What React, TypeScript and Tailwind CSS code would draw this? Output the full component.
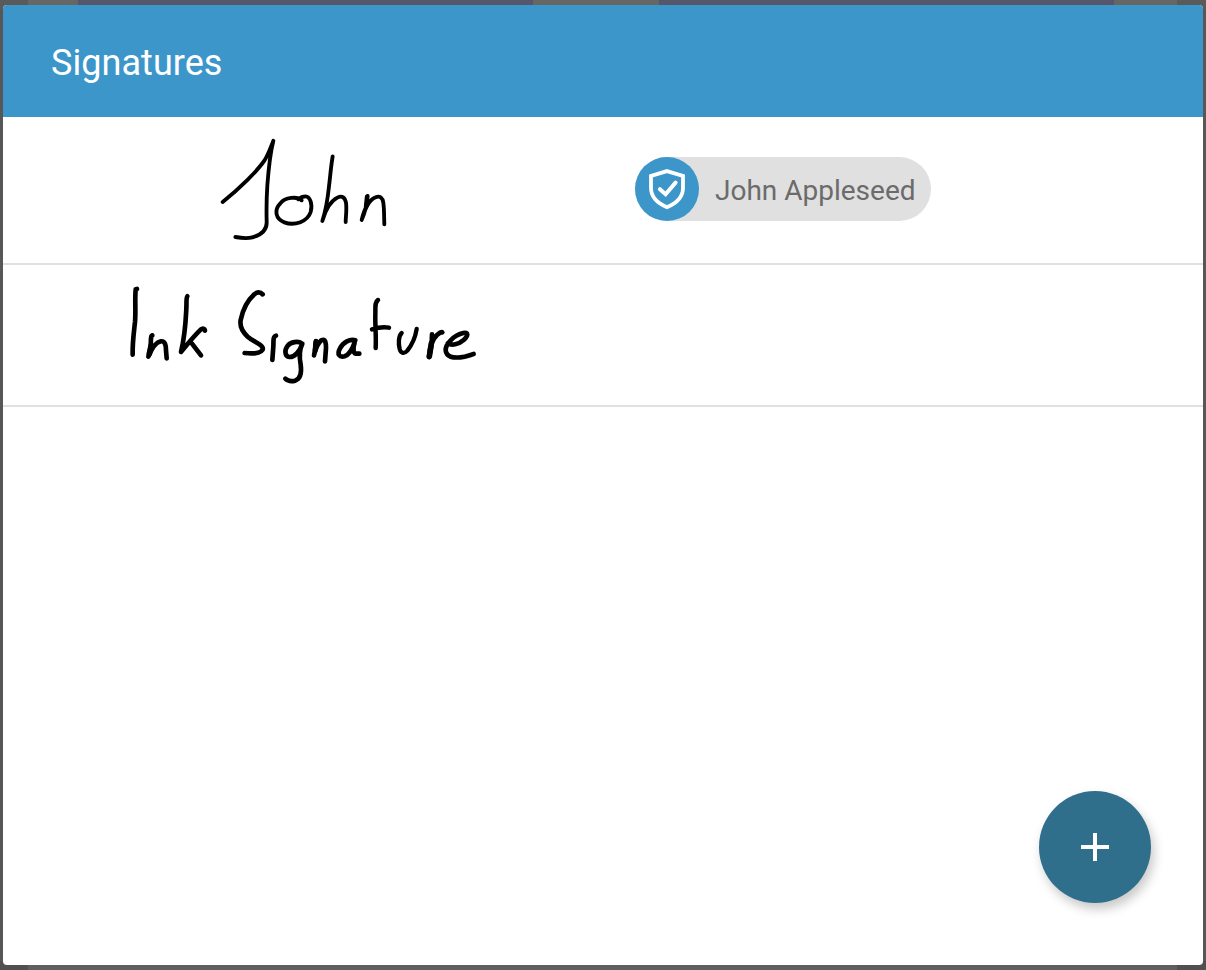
import React from "react";

function JohnInk() {
  return (
    <svg
      className="ml-[207px] h-[120px] w-[190px] shrink-0"
      viewBox="0 0 570 360"
      fill="none"
      stroke="#000"
      strokeWidth="11.5"
      strokeLinecap="round"
      strokeLinejoin="round"
      role="img"
      aria-label="John"
    >
      <path d="M38 216C88 176 143 122 163 92C175 73 182 52 190 32C180 72 176 112 172 166C169 212 169 238 170 276C171 304 148 316 127 322C108 327 92 324 76 321" />
      <path d="M275 211C262 198 225 202 211 220C191 240 197 268 223 277C255 289 293 274 302 246C309 222 299 199 287 199C279 199 270 203 264 208" />
      <path d="M368 79C362 115 361 138 357 169C353 208 347 242 337 273C345 245 359 215 382 203C397 195 405 203 408 218C411 240 407 258 407 276" />
      <path d="M473 198C471 222 465 247 455 270C462 240 477 210 497 202C510 196 518 204 520 218C523 240 522 262 523 283" />
      <path d="M471 200L468 230" strokeWidth="13" />
    </svg>
  );
}

function InkSignature() {
  return (
    <svg
      className="ml-[117px] h-[110px] w-[370px] shrink-0"
      viewBox="0 0 1110 330"
      fill="none"
      stroke="#000"
      strokeWidth="14"
      strokeLinecap="round"
      strokeLinejoin="round"
      role="img"
      aria-label="Ink Signature"
    >
      <path d="M51 27L47 28C44 65 48 91 45 126C41 163 37 190 38 224" />
      <path d="M97 166C92 167 93 180 92 196C91 210 89 221 85 230C95 206 106 186 122 184C136 182 138 198 138 211L140 235" />
      <path d="M93 198L88 221" strokeWidth="17" />
      <path d="M202 49C198 54 200 70 199 86C197 125 196 162 183 216C200 196 220 170 242 149C248 144 254 145 255 152M216 191L243 226" />
      <path d="M428 43C420 34 410 36 403 43C382 62 368 91 362 120C358 143 370 158 383 170C399 184 418 190 426 200C434 211 419 219 404 220C392 221 382 220 374 219" />
      <path d="M468 167C458 169 461 185 460 200L457 240" />
      <path d="M545 190C535 182 512 186 503 197C492 211 495 230 508 231C525 232 540 212 547 191C538 209 538 233 542 254C545 276 541 297 525 302C513 305 503 303 496 296" />
      <path d="M588 183C588 200 584 214 582 226C587 203 594 190 604 181C617 174 618 190 618 204L615 244" />
      <path d="M588 186L586 210" strokeWidth="16" />
      <path d="M706 181C690 176 670 186 660 205C650 223 658 233 674 229C690 224 698 204 704 188C699 204 699 219 707 221L718 221" />
      <path d="M774 60C763 67 767 85 766 103C765 139 769 169 767 204M756 148C775 142 792 140 807 143" strokeWidth="13.5" />
      <path d="M845 159C835 169 835 191 839 207C843 221 853 222 862 212C874 197 886 172 890 147" strokeWidth="13" />
      <path d="M936 163C936 186 934 208 927 231C929 203 937 178 951 165C959 158 965 155 967 157" />
      <path d="M934 190L928 229" strokeWidth="17" />
      <path d="M983 190C995 197 1015 194 1031 180C1046 166 1045 156 1030 159C1002 165 976 192 977 211C979 232 1001 234 1021 232C1038 231 1049 225 1061 222" />
    </svg>
  );
}

export default function App() {
  return (
    <div className="flex h-[970px] w-[1206px] flex-col overflow-hidden bg-[#575757] font-[Roboto,sans-serif]">
      <div className="flex h-[9px] shrink-0 bg-[#5a5a5a] pl-[28px]">
        <div className="w-[50px] bg-[#666665]" />
        <div className="w-[455px] bg-[#55566a]" />
        <div className="w-[126px] bg-[#666665]" />
        <div className="w-[455px] bg-[#55566a]" />
        <div className="w-[63px] bg-[#666665]" />
      </div>
      <main className="relative z-10 mx-[3px] -mt-1 flex h-[960px] shrink-0 flex-col overflow-hidden rounded bg-white">
        <header className="flex h-[112px] shrink-0 items-center bg-[#3c96ca] pl-12 pt-[4px]">
          <h1 className="text-[36px] font-normal leading-none tracking-[0.05px] text-white">Signatures</h1>
        </header>
        <div className="flex h-[148px] shrink-0 items-center border-b-2 border-[#e0e0e0]">
          <JohnInk />
          <div className="mb-[2px] ml-[235px] flex h-16 w-[296px] items-center rounded-full bg-[#e0e0e0]">
            <span className="flex size-16 shrink-0 items-center justify-center rounded-full bg-[#3c96ca]">
              <svg className="size-16" viewBox="0 0 64 64" fill="none" stroke="#fff" strokeWidth="3.8">
                <path d="M32 14.1L48 19V31C48 40 42 46 32 50.2C22 46 16 40 16 31V19Z" />
                <path d="M24.9 32.2L30.6 37.2L40.6 25.6" strokeLinecap="round" strokeWidth="4" />
              </svg>
            </span>
            <span className="ml-4 mt-[3px] whitespace-nowrap text-[28px] leading-none text-[#6b6b6b]">
              John Appleseed
            </span>
          </div>
        </div>
        <div className="flex h-[142px] shrink-0 items-center border-b-2 border-[#e0e0e0]">
          <InkSignature />
        </div>
        <div className="flex flex-1 items-end justify-end pb-[62px] pr-[52px]">
          <button
            aria-label="Add signature"
            className="flex size-28 items-center justify-center rounded-full bg-[#306f8c] shadow-[3px_6px_11px_rgba(0,0,0,0.22)]"
          >
            <svg className="size-7" viewBox="0 0 28 28" stroke="#fff" strokeWidth="4">
              <path d="M14 0V28M0 14H28" />
            </svg>
          </button>
        </div>
      </main>
      <div className="-mt-1 h-[9px] shrink-0 bg-[#505050] pl-[28px] pr-[29px]">
        <div className="h-full bg-[#5f5f5f]" />
      </div>
    </div>
  );
}
